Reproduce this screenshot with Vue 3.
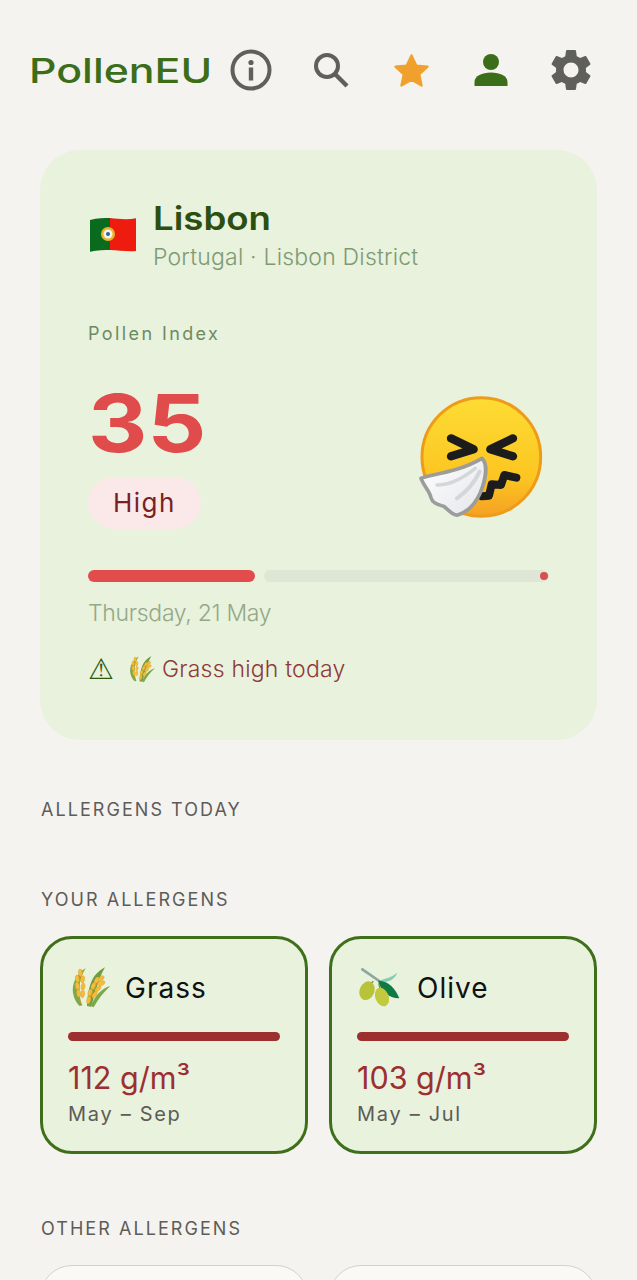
<script setup>
const grains = [
  [152, 128, -5], [143, 146, -8], [159, 148, 10], [143, 168, -8], [160, 170, 10], [147, 190, -5], [159, 192, 8],
  [214, 146, 42], [201, 151, 30], [216, 160, 58], [191, 168, 22], [205, 176, 48], [181, 188, 16], [195, 194, 36], [177, 210, 12]
]

const pinned = [
  { name: 'Grass', icon: '#ico-grass', amount: '112 g/m³', season: 'May – Sep', extra: '' },
  { name: 'Olive', icon: '#ico-olive', amount: '103 g/m³', season: 'May – Jul', extra: 'card-icon-wide' }
]
</script>

<template>
  <div class="page">
    <svg class="defs" aria-hidden="true">
      <symbol id="ico-grass" viewBox="115 108 132 132">
        <path d="M150 228C122 200 118 148 168 114C146 152 142 190 158 226Z" fill="#7fa84a" />
        <path d="M172 228C176 170 184 134 226 112C204 150 198 190 184 230Z" fill="#6f9e42" />
        <path d="M182 228C198 196 216 174 242 168C222 186 206 206 192 232Z" fill="#7fa84a" />
        <path d="M153 222C146 190 146 150 158 120" fill="none" stroke="#c9962a" stroke-width="3" />
        <path d="M178 226C182 190 196 160 224 142" fill="none" stroke="#c9962a" stroke-width="3" />
        <ellipse
          v-for="(g, i) in grains"
          :key="i"
          :cx="g[0]"
          :cy="g[1]"
          rx="6"
          ry="11"
          :transform="`rotate(${g[2]} ${g[0]} ${g[1]})`"
          fill="#f2bd3a"
          stroke="#d99c24"
          stroke-width="1"
        />
      </symbol>
      <symbol id="ico-olive" viewBox="111 108 132 132">
        <path d="M127 118L182 156" stroke="#8ea79a" stroke-width="8" stroke-linecap="round" />
        <path d="M176 152C196 146 216 142 231 128C226 150 196 162 176 152Z" fill="#86cdb0" />
        <path d="M174 152C204 150 228 178 238 205C208 206 182 182 174 152Z" fill="#0f7a44" />
        <path d="M160 154L150 164M176 160L180 176" stroke="#6f8f55" stroke-width="4" />
        <ellipse cx="141" cy="182" rx="22" ry="29" transform="rotate(22 141 182)" fill="#b9c33a" />
        <ellipse cx="186" cy="201" rx="20" ry="29" transform="rotate(-22 186 201)" fill="#c2c93f" />
      </symbol>
    </svg>

    <header class="topbar">
      <h1 class="brand">PollenEU</h1>
      <nav class="actions">
        <span class="action">
          <svg width="42" height="42" viewBox="0 0 42 42">
            <circle cx="21" cy="21" r="18.5" fill="none" stroke="#5f5f5b" stroke-width="4" />
            <circle cx="21" cy="13.5" r="2.6" fill="#5f5f5b" />
            <rect x="18.8" y="18.5" width="4.4" height="13" fill="#5f5f5b" />
          </svg>
        </span>
        <span class="action">
          <svg width="38" height="38" viewBox="0 0 38 38">
            <circle cx="15" cy="15" r="11" fill="none" stroke="#5f5f5b" stroke-width="4" />
            <path d="M23 23L35 35" stroke="#5f5f5b" stroke-width="4.4" />
          </svg>
        </span>
        <span class="action">
          <svg width="35" height="33" viewBox="0 0 38 36">
            <path d="M19 1.5L24.2 12.6L36.5 13.9L27.4 22.2L30 34.4L19 28.2L8 34.4L10.6 22.2L1.5 13.9L13.8 12.6Z" fill="#f0a02c" stroke="#f0a02c" stroke-width="2.5" stroke-linejoin="round" />
          </svg>
        </span>
        <span class="action">
          <svg width="36" height="34" viewBox="0 0 36 34">
            <circle cx="18" cy="9" r="8" fill="#3c6e1a" />
            <path d="M1.5 33V29C1.5 23 9 19.5 18 19.5C27 19.5 34.5 23 34.5 29V33Z" fill="#3c6e1a" />
          </svg>
        </span>
        <span class="action">
          <svg width="50" height="50" viewBox="0 0 24 24">
            <path fill="#5f5f5b" d="M19.14 12.94c.04-.3.06-.61.06-.94s-.02-.64-.07-.94l2.03-1.58a.49.49 0 0 0 .12-.61l-1.92-3.32a.49.49 0 0 0-.59-.22l-2.39.96c-.5-.38-1.03-.7-1.62-.94l-.36-2.54a.48.48 0 0 0-.48-.41h-3.84c-.24 0-.43.17-.47.41l-.36 2.54c-.59.24-1.13.57-1.62.94l-2.39-.96c-.22-.08-.47 0-.59.22L2.74 8.87c-.12.21-.08.47.12.61l2.03 1.58c-.05.3-.09.63-.09.94s.02.64.07.94l-2.03 1.58a.49.49 0 0 0-.12.61l1.92 3.32c.12.22.37.29.59.22l2.39-.96c.5.38 1.03.7 1.62.94l.36 2.54c.05.24.24.41.48.41h3.84c.24 0 .44-.17.47-.41l.36-2.54c.59-.24 1.13-.56 1.62-.94l2.39.96c.22.08.47 0 .59-.22l1.92-3.32c.12-.22.07-.47-.12-.61l-2.01-1.58zM12 15.6A3.61 3.61 0 0 1 8.4 12c0-1.98 1.62-3.6 3.6-3.6s3.6 1.62 3.6 3.6-1.62 3.6-3.6 3.6z" />
          </svg>
        </span>
      </nav>
    </header>

    <section class="hero">
      <div class="place">
        <svg class="flag" width="48" height="36" viewBox="0 0 48 36">
          <path d="M2 4C10 2 16 2 22 2V34C16 34 10 34 2 35.7Z" fill="#0a6b1f" />
          <path d="M22 2C30 3 40 4 48 2.3V35C40 36 30 34 22 34Z" fill="#ee1c0e" />
          <circle cx="20" cy="18" r="7" fill="#e6b52c" />
          <circle cx="20" cy="18" r="4.5" fill="#f4f1ea" />
          <circle cx="20" cy="18" r="2" fill="#2f5fa8" />
        </svg>
        <div>
          <h2 class="city">Lisbon</h2>
          <p class="region">Portugal · Lisbon District</p>
        </div>
      </div>

      <p class="index-label">Pollen Index</p>

      <div class="reading">
        <div>
          <div class="index-value">35</div>
          <span class="level">High</span>
        </div>
        <svg class="face" width="130" height="124" viewBox="50 45 390 372">
          <defs>
            <linearGradient id="skin" x1="0" y1="0" x2="0" y2="1">
              <stop offset="0" stop-color="#fddc34" />
              <stop offset="0.68" stop-color="#fcc521" />
              <stop offset="1" stop-color="#f5a024" />
            </linearGradient>
            <linearGradient id="tissue" x1="0" y1="0" x2="1" y2="1">
              <stop offset="0" stop-color="#ffffff" />
              <stop offset="1" stop-color="#e4e6e9" />
            </linearGradient>
          </defs>
          <circle cx="243" cy="228" r="178" fill="url(#skin)" stroke="#ee9b18" stroke-width="9" />
          <path d="M152 172L220 205L152 226" fill="none" stroke="#1c1c1c" stroke-width="25" stroke-linecap="round" stroke-linejoin="round" />
          <path d="M338 172L270 205L338 226" fill="none" stroke="#1c1c1c" stroke-width="25" stroke-linecap="round" stroke-linejoin="round" />
          <path d="M348 290L312 282L302 312L274 310L266 344L246 346" fill="none" stroke="#1c1c1c" stroke-width="24" stroke-linecap="round" stroke-linejoin="round" />
          <path d="M245 232C262 250 258 290 240 335C224 370 205 392 172 402C158 405 146 388 130 376C112 370 96 366 92 350C88 330 72 318 62 292C90 280 170 276 245 232Z" fill="url(#tissue)" stroke="#9c9c9c" stroke-width="11" stroke-linejoin="round" />
          <path d="M110 312C150 312 190 290 225 262" fill="none" stroke="#d4d6d9" stroke-width="10" stroke-linecap="round" />
          <path d="M170 352C195 335 220 310 238 272" fill="none" stroke="#d4d6d9" stroke-width="12" stroke-linecap="round" />
        </svg>
      </div>

      <div class="scale">
        <div class="scale-fill"></div>
        <div class="scale-track"><i class="scale-dot"></i></div>
      </div>

      <p class="date">Thursday, 21 May</p>

      <div class="alert">
        <span class="alert-sign">⚠</span>
        <svg class="alert-icon"><use href="#ico-grass" /></svg>
        <span class="alert-text">Grass high today</span>
      </div>
    </section>

    <h3 class="section-title today">ALLERGENS TODAY</h3>

    <h3 class="section-title yours">YOUR ALLERGENS</h3>
    <div class="cards">
      <article v-for="item in pinned" :key="item.name" class="card">
        <div class="card-head">
          <svg class="card-icon" :class="item.extra"><use :href="item.icon" /></svg>
          <span class="card-name">{{ item.name }}</span>
        </div>
        <div class="card-bar"></div>
        <div class="card-amount">{{ item.amount }}</div>
        <div class="card-season">{{ item.season }}</div>
      </article>
    </div>

    <h3 class="section-title others">OTHER ALLERGENS</h3>
    <div class="cards">
      <article class="card card-plain"></article>
      <article class="card card-plain"></article>
    </div>
  </div>
</template>

<style scoped>
.page {
  height: 1280px;
  overflow: hidden;
  background: #f5f3ef;
  font-family: Inter, "Noto Sans", sans-serif;
}

.defs {
  position: absolute;
  width: 0;
  height: 0;
}

.topbar {
  display: flex;
  align-items: center;
  height: 44px;
  padding: 48px 26px 0 29px;
}

.brand {
  margin: 0;
  font-size: 34px;
  font-weight: 500;
  color: #3c6e1a;
  transform: scaleX(1.26);
  transform-origin: left;
}

.actions {
  display: flex;
  margin-left: auto;
}

.action {
  display: flex;
  align-items: center;
  justify-content: center;
  width: 80px;
}

.hero {
  margin: 58px 40px 0;
  height: 590px;
  box-sizing: border-box;
  padding: 48px;
  border-radius: 40px;
  background: #e8f2dd;
}

.place {
  display: flex;
  align-items: center;
  gap: 17px;
}

.flag {
  flex: none;
  margin-top: -2px;
}

.city {
  margin: 0;
  font-size: 33px;
  line-height: 40px;
  font-weight: 600;
  color: #2b4f10;
  transform: scaleX(1.11);
  transform-origin: left;
}

.region {
  margin: 4px 0 0;
  font-size: 23px;
  line-height: 30px;
  font-weight: 300;
  letter-spacing: 0.2px;
  color: #7f9a73;
}

.index-label {
  margin: 50px 0 0;
  font-size: 18px;
  line-height: 24px;
  letter-spacing: 2.4px;
  color: #6e8a60;
}

.reading {
  display: flex;
  justify-content: space-between;
  align-items: flex-end;
  margin-top: 31px;
  padding-right: 2px;
}

.index-value {
  font-size: 80px;
  line-height: 92px;
  font-weight: 700;
  color: #e04b4b;
  transform: scaleX(1.15);
  transform-origin: left;
}

.level {
  display: inline-block;
  margin-top: 8px;
  padding: 0 25px;
  border-radius: 27px;
  font-size: 26px;
  line-height: 52px;
  letter-spacing: 1.5px;
  background: #fbe9e9;
  color: #7a1f22;
}

.face {
  margin-bottom: 9px;
}

.scale {
  display: flex;
  gap: 9px;
  height: 12px;
  margin-top: 41px;
}

.scale-fill {
  width: 167px;
  border-radius: 6px;
  background: #e24c4c;
}

.scale-track {
  position: relative;
  flex: 1;
  border-radius: 6px;
  background: #dfe6d5;
}

.scale-dot {
  position: absolute;
  top: 2px;
  right: 1px;
  width: 8px;
  height: 8px;
  border-radius: 50%;
  background: #d9504f;
}

.date {
  margin: 16px 0 0;
  font-size: 23px;
  line-height: 30px;
  font-weight: 300;
  letter-spacing: -0.3px;
  color: #94a888;
}

.alert {
  display: flex;
  align-items: center;
  margin-top: 25px;
  height: 32px;
}

.alert-sign {
  width: 39px;
  font-family: "DejaVu Sans", sans-serif;
  font-size: 29px;
  line-height: 32px;
  color: #2f5a10;
}

.alert-icon {
  width: 29px;
  height: 29px;
  margin-right: 6px;
}

.alert-text {
  font-size: 23px;
  font-weight: 300;
  letter-spacing: 0.2px;
  color: #8f3a38;
}

.section-title {
  margin: 0;
  padding-left: 41px;
  font-size: 18px;
  line-height: 24px;
  font-weight: 400;
  letter-spacing: 2.05px;
  color: #5c5c58;
}

.today {
  margin-top: 58px;
}

.yours {
  margin-top: 66px;
  margin-bottom: 24px;
}

.others {
  margin-top: 63px;
  margin-bottom: 24px;
}

.cards {
  display: grid;
  grid-template-columns: 1fr 1fr;
  gap: 21px;
  padding: 0 40px;
}

.card {
  height: 218px;
  box-sizing: border-box;
  padding: 28px 25px 0;
  border: 3px solid #3f6f1b;
  border-radius: 32px;
  background: #e8f2dd;
}

.card-plain {
  border: 1px solid #d2d1ca;
  background: #faf9f6;
}

.card-head {
  display: flex;
  align-items: center;
  gap: 13px;
  height: 42px;
}

.card-icon {
  flex: none;
  width: 44px;
  height: 44px;
}

.card-icon-wide {
  margin-right: 3px;
}

.card-name {
  font-size: 28px;
  letter-spacing: 1px;
  color: #111;
}

.card-bar {
  height: 9px;
  margin-top: 23px;
  border-radius: 5px;
  background: #9c2f2f;
}

.card-amount {
  margin-top: 17px;
  font-size: 30.5px;
  line-height: 40px;
  color: #9c2f2f;
}

.card-season {
  margin-top: 3px;
  font-size: 20px;
  line-height: 26px;
  letter-spacing: 1.7px;
  color: #5c5c58;
}
</style>

<style>
html,
body {
  margin: 0;
  background: #f5f3ef;
}
</style>
